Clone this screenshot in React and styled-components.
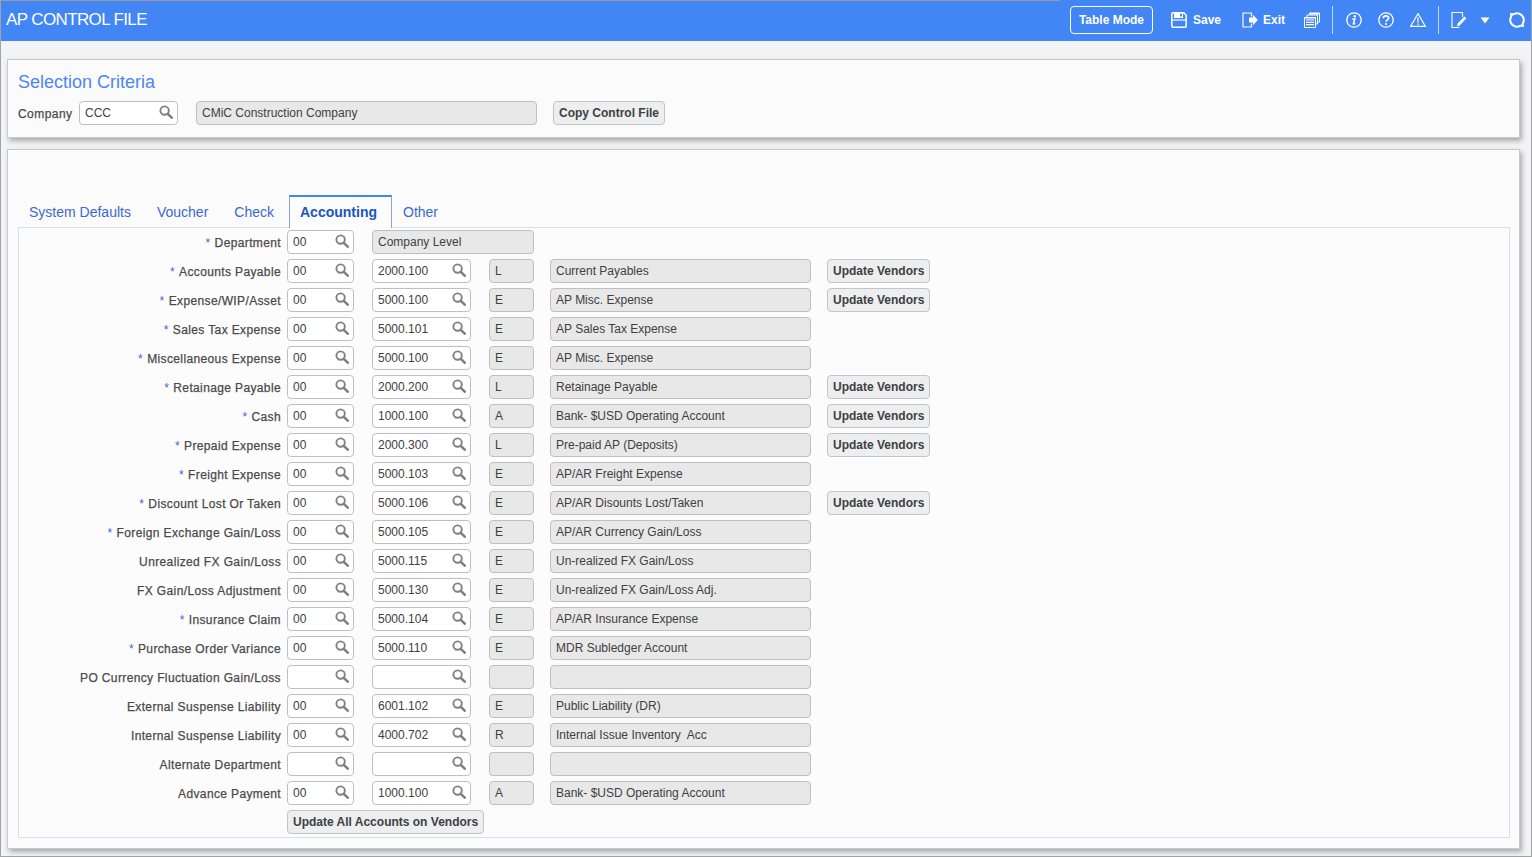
import React from 'react';
import styled, { createGlobalStyle } from 'styled-components';

const rows = [
  { label: 'Department', req: true, dept: '00', company: 'Company Level' },
  { label: 'Accounts Payable', req: true, dept: '00', acct: '2000.100', type: 'L', desc: 'Current Payables', update: true },
  { label: 'Expense/WIP/Asset', req: true, dept: '00', acct: '5000.100', type: 'E', desc: 'AP Misc. Expense', update: true },
  { label: 'Sales Tax Expense', req: true, dept: '00', acct: '5000.101', type: 'E', desc: 'AP Sales Tax Expense' },
  { label: 'Miscellaneous Expense', req: true, dept: '00', acct: '5000.100', type: 'E', desc: 'AP Misc. Expense' },
  { label: 'Retainage Payable', req: true, dept: '00', acct: '2000.200', type: 'L', desc: 'Retainage Payable', update: true },
  { label: 'Cash', req: true, dept: '00', acct: '1000.100', type: 'A', desc: 'Bank- $USD Operating Account', update: true },
  { label: 'Prepaid Expense', req: true, dept: '00', acct: '2000.300', type: 'L', desc: 'Pre-paid AP (Deposits)', update: true },
  { label: 'Freight Expense', req: true, dept: '00', acct: '5000.103', type: 'E', desc: 'AP/AR Freight Expense' },
  { label: 'Discount Lost Or Taken', req: true, dept: '00', acct: '5000.106', type: 'E', desc: 'AP/AR Disounts Lost/Taken', update: true },
  { label: 'Foreign Exchange Gain/Loss', req: true, dept: '00', acct: '5000.105', type: 'E', desc: 'AP/AR Currency Gain/Loss' },
  { label: 'Unrealized FX Gain/Loss', dept: '00', acct: '5000.115', type: 'E', desc: 'Un-realized FX Gain/Loss' },
  { label: 'FX Gain/Loss Adjustment', dept: '00', acct: '5000.130', type: 'E', desc: 'Un-realized FX Gain/Loss Adj.' },
  { label: 'Insurance Claim', req: true, dept: '00', acct: '5000.104', type: 'E', desc: 'AP/AR Insurance Expense' },
  { label: 'Purchase Order Variance', req: true, dept: '00', acct: '5000.110', type: 'E', desc: 'MDR Subledger Account' },
  { label: 'PO Currency Fluctuation Gain/Loss', dept: '', acct: '', type: '', desc: '' },
  { label: 'External Suspense Liability', dept: '00', acct: '6001.102', type: 'E', desc: 'Public Liability (DR)' },
  { label: 'Internal Suspense Liability', dept: '00', acct: '4000.702', type: 'R', desc: 'Internal Issue Inventory  Acc' },
  { label: 'Alternate Department', dept: '', acct: '', type: '', desc: '' },
  { label: 'Advance Payment', dept: '00', acct: '1000.100', type: 'A', desc: 'Bank- $USD Operating Account' },
];

const tabs = ['System Defaults', 'Voucher', 'Check', 'Accounting', 'Other'];

const GlobalStyle = createGlobalStyle`
  html, body {
    margin: 0;
    padding: 0;
    height: 100%;
    overflow: hidden;
  }
  body {
    font-family: "Liberation Sans", Arial, sans-serif;
    font-size: 12px;
    color: #404040;
  }
`;

const Page = styled.div`
  box-sizing: border-box;
  width: 1532px;
  height: 857px;
  background: #f2f3f5;
  border-left: 1px solid #a3a3a3;
  border-right: 1px solid #a3a3a3;
  border-bottom: 1px solid #a3a3a3;
`;

const Header = styled.header`
  position: relative;
  height: 41px;
  box-sizing: border-box;
  background: #4285f4;
  color: #fff;
  display: flex;
  align-items: center;
  justify-content: space-between;
  padding: 0 6px 1px 5px;

  &::before {
    content: '';
    position: absolute;
    left: 0;
    top: 0;
    width: 1059px;
    height: 1px;
    background: #9b9b9b;
  }
`;

const Title = styled.h1`
  margin: 0;
  font-size: 17px;
  font-weight: 400;
  letter-spacing: -0.62px;
`;

const Actions = styled.div`
  display: flex;
  align-items: center;
`;

const ModeButton = styled.button`
  box-sizing: border-box;
  width: 83px;
  height: 28px;
  margin-right: 18px;
  border: 1px solid #fff;
  border-radius: 4px;
  background: transparent;
  color: #fff;
  font: 700 12px "Liberation Sans", Arial, sans-serif;
  padding: 0;
`;

const TextAction = styled.span`
  display: flex;
  align-items: center;
  gap: ${(p) => p.$gap}px;
  margin-right: ${(p) => p.$after}px;
  font-weight: 700;
  font-size: 12px;
`;

const IconSlot = styled.span`
  display: flex;
  align-items: center;
  width: ${(p) => p.$w || 16}px;
  height: 16px;
  margin-right: ${(p) => p.$after || 0}px;
`;

const Divider = styled.span`
  width: 1px;
  height: 28px;
  background: #c4d8fb;
  margin: 0 ${(p) => p.$right}px 0 ${(p) => p.$left}px;
`;

const Panel = styled.section`
  box-sizing: border-box;
  width: 1513px;
  margin-left: 6px;
  background: #fbfbfb;
  border: 1px solid #c9c9c9;
  box-shadow: 2px 3px 5px rgba(0, 0, 0, 0.3);
`;

const CriteriaPanel = styled(Panel)`
  height: 79px;
  margin-top: 18px;
  padding: 11px 10px 0;
`;

const AccountsPanel = styled(Panel)`
  height: 700px;
  margin-top: 11px;
  padding: 45px 10px 0;
`;

const CriteriaTitle = styled.h2`
  margin: 0 0 8px;
  color: #4d86f5;
  font-size: 18px;
  line-height: 22px;
  font-weight: 400;
`;

const CriteriaRow = styled.div`
  display: flex;
  align-items: center;
`;

const CompanyLabel = styled.label`
  width: 61px;
  padding-top: 2px;
  color: #4a4a4a;
  font-size: 12px;
  letter-spacing: 0.45px;
  -webkit-text-stroke: 0.25px #4a4a4a;
  white-space: nowrap;
`;

const Field = styled.div`
  box-sizing: border-box;
  width: ${(p) => (p.$w ? `${p.$w}px` : '100%')};
  height: 24px;
  display: flex;
  align-items: center;
  justify-content: space-between;
  padding: 0 4px 0 5px;
  border: 1px solid #bfbfbf;
  border-radius: 4px;
  background: ${(p) => (p.$readonly ? '#e8e8e8' : '#fff')};
  color: #404040;
  font-size: 12px;
  white-space: pre;
`;

const SearchGlyph = styled.svg`
  margin-top: -2px;
  flex: none;
`;

const ActionButton = styled.button`
  box-sizing: border-box;
  height: 24px;
  padding: 0 5px;
  border: 1px solid #c4c4c4;
  border-radius: 4px;
  background: #eceeef;
  color: #404040;
  font: 700 12px "Liberation Sans", Arial, sans-serif;
  white-space: nowrap;
`;

const Spaced = styled.div`
  margin-left: ${(p) => p.$left}px;
`;

const TabBar = styled.nav`
  display: flex;
  align-items: flex-end;
  height: 32px;
`;

const Tab = styled.div`
  box-sizing: border-box;
  height: ${(p) => (p.$active ? '33px' : '32px')};
  margin-bottom: ${(p) => (p.$active ? '-1px' : '0')};
  margin-right: ${(p) => (p.$active ? '0' : '4px')};
  padding: ${(p) => (p.$active ? '7px 14px 0 10px' : '9px 11px 0')};
  position: relative;
  font-size: 14px;
  color: ${(p) => (p.$active ? '#1a55c4' : '#3a68d2')};
  font-weight: ${(p) => (p.$active ? 700 : 400)};
  background: ${(p) => (p.$active ? '#fcfcfc' : 'transparent')};
  border-top: ${(p) => (p.$active ? '2px solid #4285f4' : '0')};
  border-left: ${(p) => (p.$active ? '1px solid #8fa6c9' : '0')};
  border-right: ${(p) => (p.$active ? '1px solid #8fa6c9' : '0')};
`;

const TabBody = styled.div`
  box-sizing: border-box;
  width: 1492px;
  height: 611px;
  padding-top: 2px;
  background: #fcfcfc;
  border: 1px solid #d9e0ea;
`;

const Grid = styled.div`
  display: grid;
  grid-template-columns: 268px 67px 18px 99px 18px 45px 16px 261px 16px 103px;
  grid-auto-rows: 24px;
  row-gap: 5px;
  align-items: center;
`;

const RowLabel = styled.label`
  grid-column: 1;
  justify-self: end;
  margin-right: 6px;
  padding-top: 1px;
  font-size: 12px;
  color: #4a4a4a;
  letter-spacing: 0.37px;
  -webkit-text-stroke: 0.25px #4a4a4a;
  white-space: nowrap;
`;

const Star = styled.span`
  color: #3a68d2;
  margin-right: 4px;
  -webkit-text-stroke: 0;
`;

const Slot = styled.div`
  grid-column: ${(p) => p.$col};
`;

const SearchIcon = () => (
  <SearchGlyph width="14" height="14" viewBox="0 0 14 14" fill="none" stroke="#808080">
    <circle cx="5.6" cy="5.6" r="4.2" strokeWidth="1.9" />
    <path d="M8.8 8.8 L12.7 12.7" strokeWidth="2.6" strokeLinecap="round" />
  </SearchGlyph>
);

const LookupField = ({ value, w }) => (
  <Field $w={w}>
    <span>{value}</span>
    <SearchIcon />
  </Field>
);

const SaveIcon = () => (
  <svg width="16" height="16" viewBox="0 0 16 16" fill="none" stroke="#fff" strokeWidth="1.5">
    <path d="M.8 2 Q.8 .8 2 .8 H12.8 L15.2 3.2 V14 Q15.2 15.2 14 15.2 H2 Q.8 15.2 .8 14 Z" />
    <path d="M3 1 H12 V6 H3 Z" fill="#fff" stroke="none" />
    <path d="M9 1.8 H11 V4.6 H9 Z" fill="#4285f4" stroke="none" />
    <path d="M1 7.4 H15 V8.6 H1 Z" fill="#fff" stroke="none" />
  </svg>
);

const ExitIcon = () => (
  <svg width="16" height="16" viewBox="0 0 16 16" fill="none" stroke="#fff" strokeWidth="1.2">
    <path d="M9.5 4.5 V1 H1 V15 H9.5 V11.5" />
    <path d="M7 5.5 H11 V2.8 L15.8 8 L11 13.2 V10.5 H7 Z" fill="#fff" stroke="none" />
  </svg>
);

const RecordsIcon = () => (
  <svg width="16" height="16" viewBox="0 0 16 16" fill="none" stroke="#fff" strokeWidth="1">
    <path d="M5.5 2.5 V1 H15.5 V10 H14" />
    <path d="M3 5 V3 H13.5 V12 H12" />
    <path d="M.5 5.5 H11.5 V15.5 H.5 Z" />
    <path d="M2 8 H10 M2 10.3 H10 M2 12.6 H10" strokeWidth="1.2" />
    <path d="M5.5 1 H15.5 V2.6 H5.5 Z M.5 5 H11.5 V6.5 H.5 Z" fill="#fff" stroke="none" />
  </svg>
);

const InfoIcon = () => (
  <svg width="16" height="16" viewBox="0 0 16 16" fill="none" stroke="#fff">
    <circle cx="8" cy="8" r="7.2" strokeWidth="1.3" />
    <circle cx="8.8" cy="4.2" r="1.2" fill="#fff" stroke="none" />
    <path d="M6.3 7 H8.8 L7.4 11.8 H9.4" strokeWidth="1.6" />
  </svg>
);

const HelpIcon = () => (
  <svg width="16" height="16" viewBox="0 0 16 16" fill="none" stroke="#fff">
    <circle cx="8" cy="8" r="7.2" strokeWidth="1.3" />
    <path d="M5.4 6.2 C5.4 3.2 10.7 3.2 10.7 6.1 C10.7 8 8 7.9 8 9.8" strokeWidth="1.7" />
    <circle cx="8" cy="12" r="1.1" fill="#fff" stroke="none" />
  </svg>
);

const WarningIcon = () => (
  <svg width="16" height="16" viewBox="0 0 16 16" fill="none" stroke="#fff">
    <path d="M8 1.6 L15.4 14.4 H.6 Z" strokeWidth="1.1" />
    <path d="M8 5.5 V10.8 M8 11.6 V13" strokeWidth="1.2" />
  </svg>
);

const EditIcon = () => (
  <svg width="16" height="16" viewBox="0 0 16 16" fill="none" stroke="#fff">
    <path d="M8.5 15.5 H1 V.5 H11.5 V5" strokeWidth="1.1" />
    <path d="M6 14.5 L6.6 11.6 L13.4 4.4 L15.4 6.2 L8.6 13.4 Z" fill="#fff" stroke="none" />
  </svg>
);

const CaretIcon = () => (
  <svg width="10" height="7" viewBox="0 0 10 7" fill="#fff">
    <path d="M.5 .5 H9.5 L5 6.5 Z" />
  </svg>
);

const RefreshIcon = () => (
  <svg width="16" height="16" viewBox="0 0 16 16" fill="none" stroke="#fff" strokeWidth="2">
    <path d="M4.5 2.3 A6.7 6.7 0 0 1 13.7 11.5" />
    <path d="M11.5 13.7 A6.7 6.7 0 0 1 2.3 4.5" />
    <path d="M1 1 L6 1.5 L1.5 6 Z M15 15 L10 14.5 L14.5 10 Z" fill="#fff" stroke="none" />
  </svg>
);

const App = () => (
  <Page>
    <GlobalStyle />
    <Header>
      <Title>AP CONTROL FILE</Title>
      <Actions>
        <ModeButton>Table Mode</ModeButton>
        <TextAction $gap={6} $after={21}><SaveIcon />Save</TextAction>
        <TextAction $gap={5} $after={19}><ExitIcon />Exit</TextAction>
        <IconSlot><RecordsIcon /></IconSlot>
        <Divider $left={12} $right={13} />
        <IconSlot $after={16}><InfoIcon /></IconSlot>
        <IconSlot $after={16}><HelpIcon /></IconSlot>
        <IconSlot><WarningIcon /></IconSlot>
        <Divider $left={12} $right={12} />
        <IconSlot $after={13}><EditIcon /></IconSlot>
        <IconSlot $w={10} $after={19}><CaretIcon /></IconSlot>
        <IconSlot><RefreshIcon /></IconSlot>
      </Actions>
    </Header>

    <CriteriaPanel>
      <CriteriaTitle>Selection Criteria</CriteriaTitle>
      <CriteriaRow>
        <CompanyLabel>Company</CompanyLabel>
        <LookupField value="CCC" w={99} />
        <Spaced $left={18}><Field $w={341} $readonly>CMiC Construction Company</Field></Spaced>
        <Spaced $left={16}><ActionButton>Copy Control File</ActionButton></Spaced>
      </CriteriaRow>
    </CriteriaPanel>

    <AccountsPanel>
      <TabBar>
        {tabs.map((t) => (
          <Tab key={t} $active={t === 'Accounting'}>{t}</Tab>
        ))}
      </TabBar>
      <TabBody>
        <Grid>
          {rows.map((r) => (
            <React.Fragment key={r.label}>
              <RowLabel>
                {r.req && <Star>*</Star>}
                {r.label}
              </RowLabel>
              <Slot $col={2}><LookupField value={r.dept} /></Slot>
              {r.company ? (
                <Slot $col="4 / 7"><Field $readonly>{r.company}</Field></Slot>
              ) : (
                <>
                  <Slot $col={4}><LookupField value={r.acct} /></Slot>
                  <Slot $col={6}><Field $readonly>{r.type}</Field></Slot>
                  <Slot $col={8}><Field $readonly>{r.desc}</Field></Slot>
                  {r.update && <Slot $col={10}><ActionButton>Update Vendors</ActionButton></Slot>}
                </>
              )}
            </React.Fragment>
          ))}
          <Slot $col="2 / 7"><ActionButton>Update All Accounts on Vendors</ActionButton></Slot>
        </Grid>
      </TabBody>
    </AccountsPanel>
  </Page>
);

export default App;
